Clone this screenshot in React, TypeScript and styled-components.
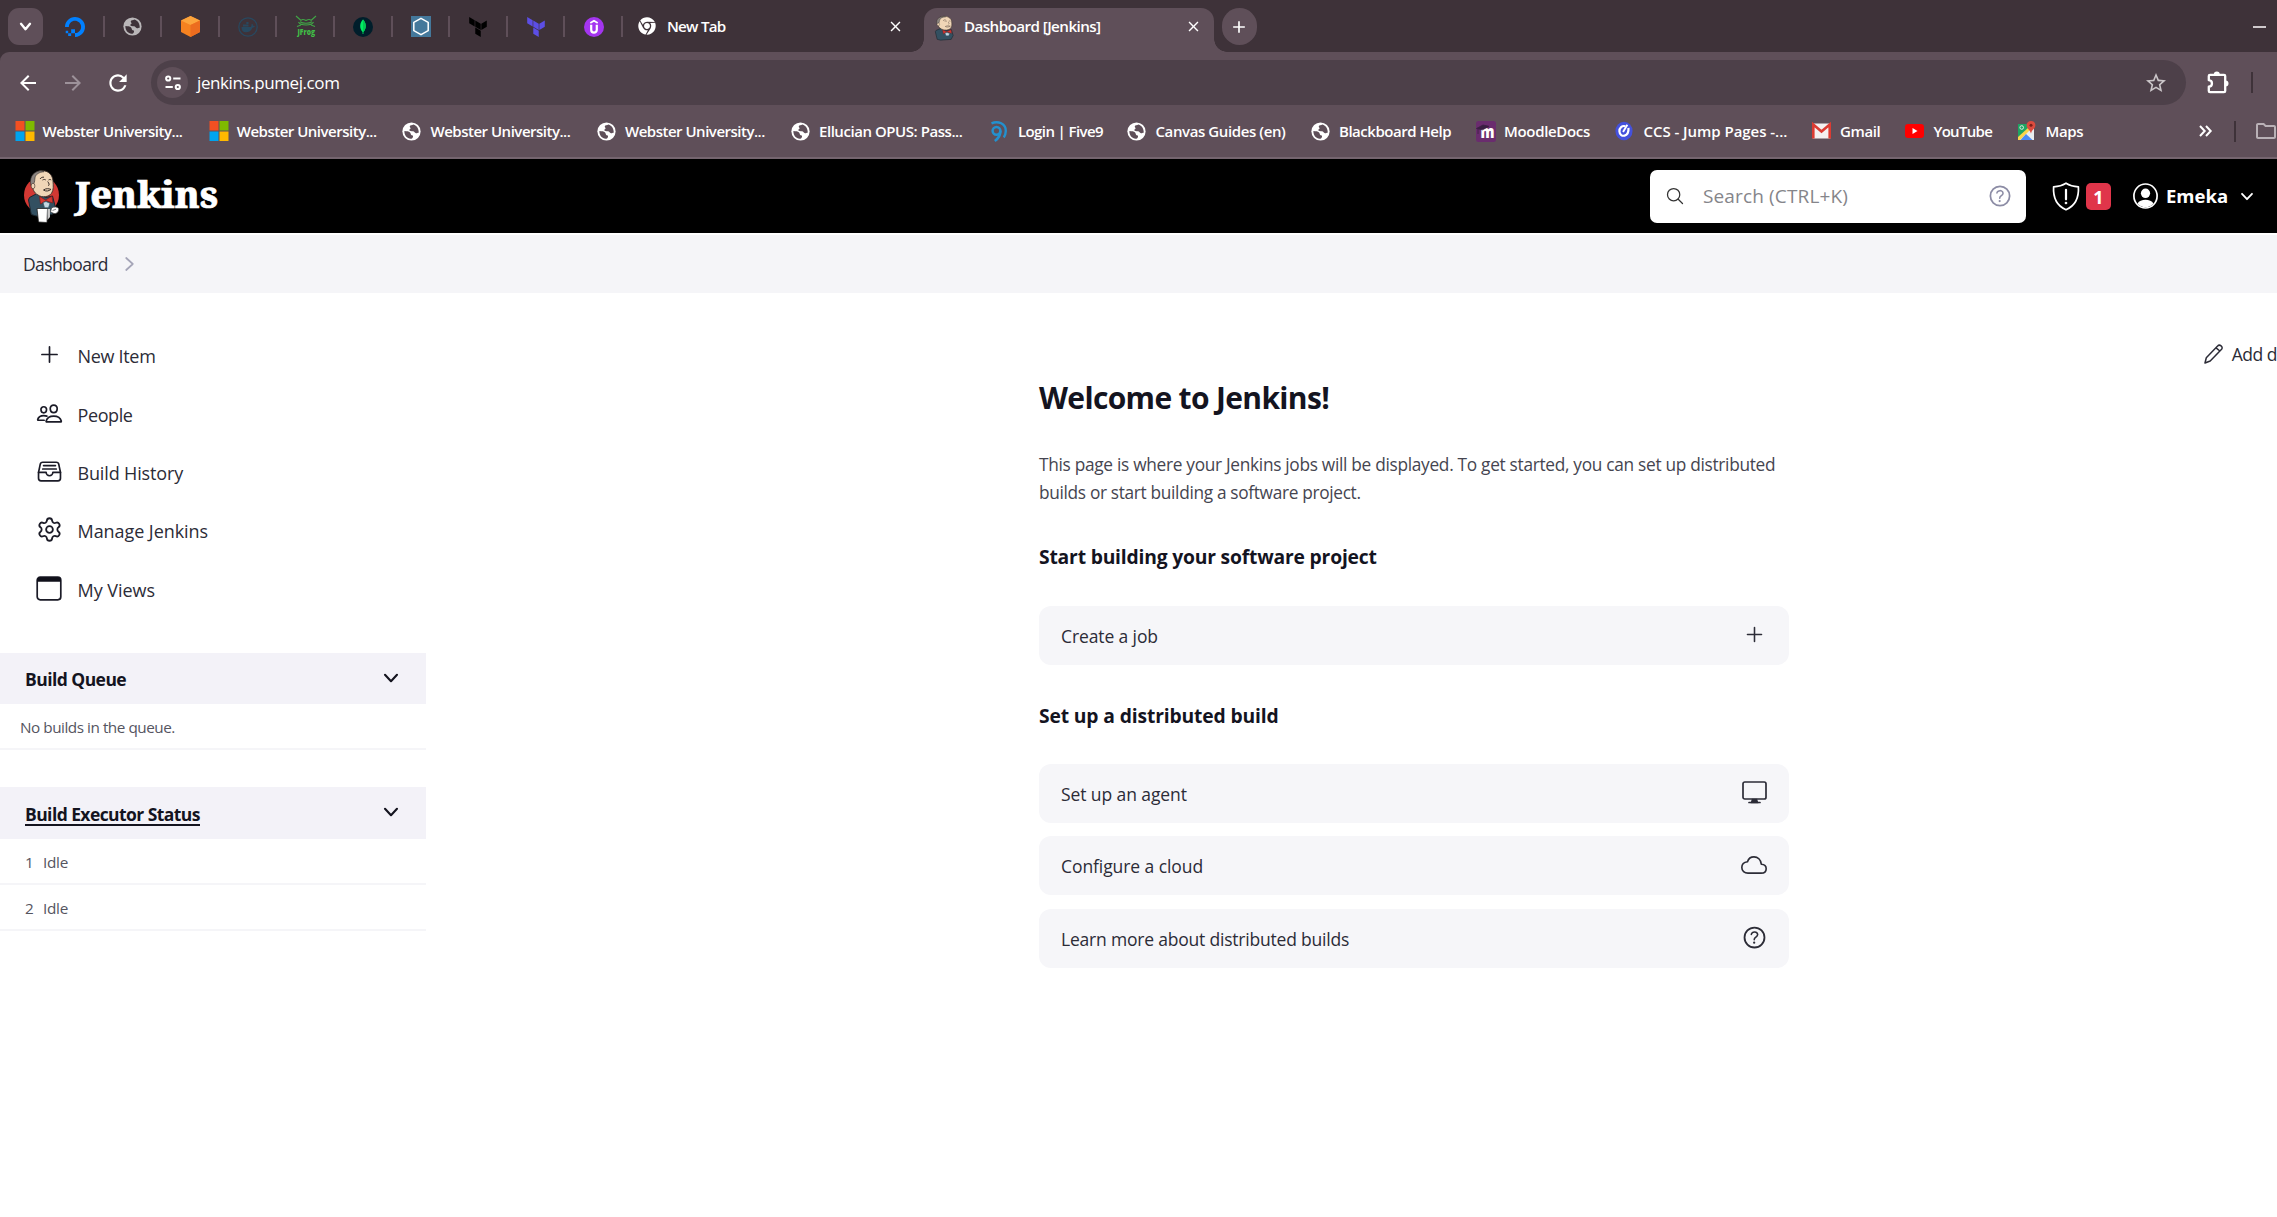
import React from "react";
import styled, { createGlobalStyle } from "styled-components";
import { Settings } from "lucide-react";
import { FaChrome } from "react-icons/fa";
import { MdArrowBack, MdArrowForward, MdRefresh, MdStarBorder, MdOutlineFolder, MdClose, MdAdd } from "react-icons/md";
import {
  IoAddOutline, IoPeopleOutline, IoFileTrayFullOutline, IoCloudOutline, IoHelpCircleOutline, IoSearchOutline,
} from "react-icons/io5";
import { SiDigitalocean, SiTerraform } from "react-icons/si";

const Global = createGlobalStyle`
  * { box-sizing: border-box; }
  html, body { margin: 0; padding: 0; background: #fff; overflow: hidden; }
  body { font-family: "Open Sans", "Noto Sans", sans-serif; color: #14141f; }
  svg { display: block; flex: none; overflow: visible; }
`;

const Page = styled.div`
  width: 2277px;
  height: 1217px;
  display: flex;
  flex-direction: column;
  overflow: hidden;
`;

const Label = styled.span<{ $size: number; $weight?: number; $color?: string; $ls?: number }>`
  font-size: ${(p) => p.$size}px;
  font-weight: ${(p) => p.$weight ?? 400};
  color: ${(p) => p.$color ?? "inherit"};
  letter-spacing: ${(p) => p.$ls ?? 0}px;
  line-height: 28px;
  white-space: nowrap;
`;

/* ---------- browser chrome ---------- */

const TabStrip = styled.div`
  height: 52px;
  flex: none;
  display: flex;
  align-items: flex-start;
  background: #3e3239;
  padding-left: 8px;
`;
const TabSearch = styled.button`
  width: 35px;
  height: 37px;
  margin: 8px 4px 0 0;
  border: 0;
  padding: 0;
  border-radius: 11px;
  background: #5f4f59;
  color: #fff;
  display: grid;
  place-items: center;
`;
const Pinned = styled.div`
  width: 57.6px;
  height: 21px;
  margin-top: 16px;
  padding-left: 1px;
  display: flex;
  align-items: center;
  justify-content: center;
  border-right: 2px solid #5f4f59;
`;
const Tab = styled.div`
  width: 301px;
  height: 52px;
  padding: 0 20px 0 15px;
  display: flex;
  align-items: center;
`;
const ActiveTab = styled.div`
  position: relative;
  width: 290px;
  height: 44px;
  margin-top: 8px;
  padding: 0 12px 8px 11px;
  border-radius: 13px 13px 0 0;
  background: #5f4f59;
  display: flex;
  align-items: center;
  &::before, &::after {
    content: "";
    position: absolute;
    bottom: 0;
    width: 13px;
    height: 13px;
  }
  &::before { left: -13px; background: radial-gradient(circle at 0 0, transparent 12.5px, #5f4f59 13px); }
  &::after { right: -13px; background: radial-gradient(circle at 100% 0, transparent 12.5px, #5f4f59 13px); }
`;
const TabTitle = styled.div`
  flex: 1;
  padding-left: 11px;
  display: flex;
`;
const NewTab = styled.button`
  width: 35px;
  height: 37px;
  margin: 8px 0 0 8px;
  border: 0;
  padding: 0;
  border-radius: 18px;
  background: #5f4f59;
  color: #fff;
  display: grid;
  place-items: center;
`;
const Minimise = styled.div`
  width: 13px;
  height: 2px;
  margin: 26px 11px 0 auto;
  background: #cfc9cc;
`;
const ToolWrap = styled.div`
  background: #3e3239;
  flex: none;
`;
const Toolbar = styled.div`
  height: 53px;
  background: #5f4f59;
  border-top-left-radius: 9px;
  display: flex;
  align-items: center;
  padding: 8px 0 0 16px;
  color: #fff;
`;
const NavIcon = styled.div<{ $dim?: boolean }>`
  width: 24px;
  margin-right: 21px;
  display: flex;
  justify-content: center;
  color: ${(p) => (p.$dim ? "#9d929a" : "#fff")};
`;
const AddressBar = styled.div`
  width: 2035px;
  height: 45px;
  border-radius: 23px;
  background: #4d4049;
  display: flex;
  align-items: center;
  padding: 0 18px 0 6px;
`;
const SiteInfo = styled.div`
  width: 31px;
  height: 31px;
  border-radius: 50%;
  background: #5f4f59;
  display: grid;
  place-items: center;
  margin-right: 9px;
`;
const Grow = styled.div`
  flex: 1;
`;
const Extensions = styled.div`
  margin-left: 21px;
`;
const Rule = styled.div<{ $gap: number }>`
  width: 2px;
  height: 21px;
  margin-left: ${(p) => p.$gap}px;
  background: #3e3239;
  flex: none;
`;
const Bookmarks = styled.div`
  height: 54px;
  background: #5f4f59;
  border-bottom: 2px solid #75656f;
  display: flex;
  align-items: center;
  padding-left: 14.5px;
  color: #fff;
`;
const Bookmark = styled.div<{ $w: number }>`
  width: ${(p) => p.$w}px;
  flex: none;
  display: flex;
  align-items: center;
`;
const BookmarkIcon = styled.div`
  width: 28px;
  display: flex;
`;
const FolderIcon = styled.div`
  margin-left: 18px;
`;

/* ---------- Jenkins header ---------- */

const Header = styled.header`
  height: 74px;
  flex: none;
  background: #000;
  display: flex;
  align-items: center;
  padding-left: 23px;
  color: #fff;
`;
const Wordmark = styled.span`
  font-family: "Noto Serif", "DejaVu Serif Condensed", "DejaVu Serif", serif;
  font-weight: 800;
  font-size: 37px;
  line-height: 40px;
  -webkit-text-stroke: 0.6px #fff;
  margin: -5px 0 0 15px;
`;
const Search = styled.div`
  width: 376px;
  height: 53px;
  margin-left: auto;
  border-radius: 7px;
  background: #fff;
  display: flex;
  align-items: center;
  padding: 0 12px 0 15px;
  color: #8c8ca5;
`;
const SearchText = styled.div`
  flex: 1;
  display: flex;
  padding-left: 18px;
`;
const Alerts = styled.div`
  display: flex;
  align-items: center;
  margin-left: 26px;
  gap: 6px;
`;
const Badge = styled.div`
  width: 25px;
  height: 27px;
  border-radius: 5px;
  background: #e0354a;
  display: grid;
  place-items: center;
`;
const User = styled.div`
  display: flex;
  align-items: center;
  width: 144px;
  margin-left: 22px;
  gap: 8px;
`;
const UserName = styled.div`
  width: 67px;
  display: flex;
`;

const Crumbs = styled.nav`
  height: 60px;
  flex: none;
  border-top: 2px solid #fff;
  background: #f5f5f8;
  display: flex;
  align-items: center;
  padding-left: 23px;
  gap: 17px;
  color: #2c2c37;
`;

/* ---------- page body ---------- */

const Body = styled.div`
  flex: 1;
  display: flex;
  align-items: flex-start;
`;
const Side = styled.aside`
  width: 425.5px;
  flex: none;
  padding-top: 34px;
`;
const Task = styled.div`
  height: 58.4px;
  display: flex;
  align-items: center;
  padding-left: 35.5px;
  color: #2c2c37;
`;
const TaskIcon = styled.div`
  width: 42px;
  height: 27px;
  display: flex;
  align-items: center;
  margin-top: -3px;
  color: #1b1b27;
`;
const PaneHead = styled.div<{ $top: number }>`
  height: 51.3px;
  margin-top: ${(p) => p.$top}px;
  padding: 0 28px 0 25px;
  background: #f3f2f8;
  display: flex;
  align-items: center;
  justify-content: space-between;
`;
const PaneLink = styled.a`
  border-bottom: 2px solid #14141f;
  height: 23px;
  display: flex;
  align-items: center;
  margin-top: 4px;
`;
const PaneToggle = styled.div`
  margin-top: -2px;
`;
const PaneRow = styled.div<{ $pad: number }>`
  height: 46px;
  padding: 2px 0 0 ${(p) => p.$pad}px;
  border-bottom: 2px solid #f5f5f8;
  display: flex;
  align-items: center;
  color: #55555f;
`;
const Num = styled.div`
  width: 18px;
  display: flex;
`;
const Main = styled.main`
  width: 751px;
  margin-left: 613.5px;
  padding-top: 85px;
  display: flex;
  flex-direction: column;
`;
const Title = styled.h1`
  margin: 0;
  height: 40px;
  display: flex;
  align-items: center;
`;
const Intro = styled.p`
  margin: 33px 0 0;
  display: flex;
  flex-direction: column;
`;
const SubHead = styled.h2<{ $top: number }>`
  margin: ${(p) => p.$top}px 0 0;
  height: 28px;
  display: flex;
  align-items: center;
`;
const Card = styled.div<{ $top: number }>`
  height: 59px;
  margin-top: ${(p) => p.$top}px;
  padding: 1px 20px 0 22px;
  border-radius: 12px;
  background: #f6f6f9;
  display: flex;
  align-items: center;
  justify-content: space-between;
  color: #2c2c37;
`;
const CardIcon = styled.div`
  width: 29px;
  display: grid;
  place-items: center;
  margin-top: -3px;
  color: #2c2c37;
`;
const Describe = styled.div`
  margin: 47px 0 0 415px;
  flex: none;
  display: flex;
  align-items: center;
  gap: 9px;
  color: #2c2c37;
`;

/* ---------- drawings ---------- */

const Globe = ({ color = "#fff", hole = "#5f4f59", size = 19 }) => (
  <svg width={size} height={size} viewBox="0 0 20 20">
    <circle cx="10" cy="10" r="9.6" fill={color} />
    <path d="M2.5 9.5c2.600.2 4.700.3 6 1.600.9.9.5 2.300 1.700 2.800 1 .5 1.600-.3 1.400 1.500-.1 1.200-1.300 2.300-2.400 2.300C5.200 17.500 2.300 14 2.500 9.500z" fill={hole} />
    <path d="M12 2.600c-1.300.8-3.400.6-3.800 1.900-.3 1.100 1.100 1.400.8 2.400-.3.900-1.500.9-1.300 1.900.2 1 2.300.9 3.800 1 1.700.1 1.800 1.900 3.200 2.100 1.200.2 1.700-.8 2.900-.7.200-4-1.900-7.400-5.600-8.600z" fill={hole} />
  </svg>
);
const Microsoft = () => (
  <svg width="20" height="20" viewBox="0 0 20 20">
    <path fill="#f25022" d="M.5 0h9v9.500h-9z" /><path fill="#7fba00" d="M10.500 0h9v9.500h-9z" />
    <path fill="#00a4ef" d="M.5 10.500h9V20h-9z" /><path fill="#ffb900" d="M10.500 10.500h9V20h-9z" />
  </svg>
);
const Box = () => (
  <svg width="19" height="21" viewBox="0 0 19 21">
    <path d="M9.500 0 19 4.500v11.500L9.500 21 0 16V4.500z" fill="#f58220" />
    <path d="M9.500 0 19 4.500 9.500 9 0 4.500z" fill="#fca43c" />
    <path d="M19 4.500v11.500L9.500 21V9z" fill="#ec6c1f" />
  </svg>
);
const Docker = () => (
  <svg width="20" height="20" viewBox="0 0 20 20">
    <circle cx="10" cy="10" r="9.200" fill="none" stroke="#28485f" strokeWidth="1.200" />
    <path d="M3.500 10h9.200c1-.4.600-2.500 1.200-3.400 1 .6 1 1.600 1.300 2.300.8-.1 1.300.1 1.700.4-.5 1.100-1.500 1.400-2.400 1.400-1.300 3.300-3.600 4.600-6.500 4.600C5 15.300 3.400 13.300 3.500 10zM5 7.500h5.500v2H5zM8.300 5h2.200v2H8.300z" fill="#28485f" />
  </svg>
);
const FrogText = styled.text`
  font-family: "Open Sans", sans-serif;
  font-weight: 800;
  font-size: 9.500px;
  fill: #40be46;
`;
const Frog = () => (
  <svg width="20" height="21" viewBox="0 0 20 21">
    <path d="M0 0l5 4.500M20 0l-5 4.500M2.500 6c2 4 13 4 15 0M5 4.500c1.500-2 3-1 5 0 2-1 3.500-2 5 0M4 5.800c3 2 9 2 12 0M1 10.500l4-1.500M19 10.500l-4-1.500" fill="none" stroke="#40a546" strokeWidth="1.100" />
    <FrogText x="1.500" y="19" textLength="17.500" lengthAdjust="spacingAndGlyphs">JFrog</FrogText>
  </svg>
);
const Mongo = () => (
  <svg width="20" height="20" viewBox="0 0 20 20">
    <circle cx="10" cy="10" r="10" fill="#001e2b" />
    <path d="M10 2.500c3.200 3.300 4 8.500.4 12.500V17h-.8v-2C6 11 6.800 5.800 10 2.500z" fill="#00ed64" />
    <path d="M10 2.500c3.200 3.300 4 8.500.4 12.500H10z" fill="#00c853" />
  </svg>
);
const Hexagon = () => (
  <svg width="20" height="21" viewBox="0 0 20 21">
    <path d="M0 0h20v21H0z" fill="#44789b" />
    <path d="M10 2.300 17.200 6.400v8.200L10 18.700 2.800 14.600V6.400z" fill="none" stroke="#fff" strokeWidth="1.500" />
  </svg>
);
const Udemy = () => (
  <svg width="20" height="20" viewBox="0 0 20 20">
    <circle cx="10" cy="10" r="10" fill="#a435f0" />
    <path d="M6.300 6 10 3.800 13.700 6" fill="none" stroke="#fff" strokeWidth="1.800" />
    <path d="M7.200 7.800v5c0 3.700 5.600 3.700 5.600 0v-5" fill="none" stroke="#fff" strokeWidth="2.200" />
  </svg>
);
const Five9 = () => (
  <svg width="18" height="21" viewBox="0 0 18 21">
    <path d="M1.500 2.300C8-.5 16 2.500 15.800 10c-.1 2.700-.8 4.800-2 6.500" fill="none" stroke="#2391cf" strokeWidth="2.400" />
    <circle cx="6.500" cy="9.800" r="3.900" fill="none" stroke="#2391cf" strokeWidth="2.500" />
    <path d="M10.400 9.800c0 4-2 7.700-5.600 10.200" fill="none" stroke="#2391cf" strokeWidth="2.700" />
  </svg>
);
const MoodleM = styled.text`
  font-family: "Open Sans", sans-serif;
  font-weight: 800;
  font-size: 18px;
  fill: #fff;
`;
const Moodle = () => (
  <svg width="20" height="21" viewBox="0 0 20 21">
    <rect width="20" height="21" rx="2.500" fill="#6a2c6e" />
    <MoodleM x="4.500" y="16.500" textLength="14" lengthAdjust="spacingAndGlyphs">m</MoodleM>
    <path d="M.5 7.500 7 4l6 1.300L6.500 8.800zM2 8v5" fill="#3a1f42" stroke="#3a1f42" strokeWidth=".8" />
  </svg>
);
const Ccs = () => (
  <svg width="18" height="20" viewBox="0 0 18 21">
    <ellipse cx="9" cy="10.500" rx="9" ry="9.800" fill="#4451dc" />
    <path d="M10.500 5.500C7 4.500 4 7 4.200 11c.2 3.500 3 5 5.500 4.300 2.800-.8 4.300-4 4-8" fill="none" stroke="#fff" strokeWidth="2.300" />
    <path d="M8 11.500 12.500 4" stroke="#fff" strokeWidth="2" />
  </svg>
);
const Gmail = () => (
  <svg width="19" height="16" viewBox="0 0 19 16">
    <rect y=".5" width="19" height="15" rx="1.500" fill="#f4f0f0" />
    <path d="M1.300 15.500V1.500L9.500 8.500l8.200-7v14" fill="none" stroke="#dc3b32" strokeWidth="2.600" />
  </svg>
);
const YouTube = () => (
  <svg width="19" height="14" viewBox="0 0 19 14">
    <rect width="19" height="14" rx="3.200" fill="#f00" /><path d="M7.500 4v6l5-3z" fill="#fff" />
  </svg>
);
const Maps = () => (
  <svg width="19" height="20" viewBox="0 0 19 20">
    <path d="M1 3h16v16H1z" fill="#e9ecef" />
    <path d="M1 3h11v6L1 19z" fill="#1fa463" /><path d="M1 16 11.500 6.500l2 2L3 19H1z" fill="#fcd54b" />
    <path d="M3.500 19 9 13l6.500 6z" fill="#4c8bf5" />
    <circle cx="4.700" cy="6.500" r="1.800" fill="none" stroke="#d9f0e3" strokeWidth="1" />
    <path d="M14 0c2.600 0 4.400 2 4.400 4.200C18.400 7.500 15 8.500 14 12.500 13 8.500 9.600 7.500 9.600 4.200 9.600 2 11.400 0 14 0z" fill="#dd4b3e" />
    <circle cx="14" cy="4.300" r="1.500" fill="#7c1f1a" />
  </svg>
);
const Sliders = () => (
  <svg width="16" height="16" viewBox="0 0 16 16" fill="none" stroke="#fff" strokeWidth="2">
    <circle cx="3.200" cy="3.500" r="2.100" /><path d="M8.200 3.500H15.500" /><circle cx="12.800" cy="12" r="2.100" /><path d="M.5 12H7.800" />
  </svg>
);
const Puzzle = () => (
  <svg width="22" height="23" viewBox="0 0 22 23">
    <path d="M3.600 3.800H17a1.200 1.200 0 0 1 1.200 1.200V20a1.200 1.200 0 0 1-1.200 1.200H3a1.200 1.200 0 0 1-1.200-1.200v-4.300c4.200-.3 4.200-6.200 0-6.500V5A1.200 1.200 0 0 1 3 3.800z" fill="none" stroke="#fff" strokeWidth="2.300" strokeLinejoin="round" />
    <path d="M6.800 3.500a3 3 0 0 1 6 0zM18.500 9.400a3 3 0 0 1 0 6z" fill="#fff" />
  </svg>
);
const Chevron = ({ w = 13, h = 7, sw = 2, color = "currentColor" }) => (
  <svg width={w} height={h} viewBox={`0 0 ${w} ${h}`}>
    <path d={`M1 .8 ${w / 2} ${h - 0.8} ${w - 1} .8`} fill="none" stroke={color} strokeWidth={sw} strokeLinecap="round" strokeLinejoin="round" />
  </svg>
);
const ChevronRight = () => (
  <svg width="9" height="14" viewBox="0 0 9 14">
    <path d="M1.200 1 7.800 7l-6.600 6" fill="none" stroke="#a5a5b8" strokeWidth="1.700" strokeLinecap="round" strokeLinejoin="round" />
  </svg>
);
const DoubleChevron = () => (
  <svg width="13" height="12" viewBox="0 0 13 12">
    <path d="M1 1l4.700 5L1 11M7 1l4.700 5L7 11" fill="none" stroke="#fff" strokeWidth="2" />
  </svg>
);
const Shield = () => (
  <svg width="28" height="29" viewBox="0 0 28 29" fill="none" stroke="#fff" strokeWidth="1.700" strokeLinejoin="round">
    <path d="M14 1.200C10.500 3.400 6.500 4.500 1.600 4.800 1 15 4 23.500 14 27.800 24 23.500 27 15 26.400 4.800 21.500 4.500 17.500 3.400 14 1.200z" />
    <path d="M14 7.800v9.500" strokeWidth="2.200" strokeLinecap="round" /><circle cx="14" cy="21" r=".5" />
  </svg>
);
const Avatar = () => (
  <svg width="25" height="26" viewBox="0 0 25 26">
    <ellipse cx="12.500" cy="13" rx="11.600" ry="12" fill="#000" stroke="#fff" strokeWidth="1.700" />
    <ellipse cx="12.500" cy="10.300" rx="4.600" ry="4.800" fill="#fff" />
    <path d="M4.600 20.500c2.500-5 13.300-5 15.800 0-3.500 5-12.300 5-15.800 0z" fill="#fff" />
  </svg>
);
const Window = () => (
  <svg width="26" height="25" viewBox="0 0 26 25">
    <rect x="1.200" y="1.200" width="23.600" height="22.600" rx="3" fill="none" stroke="#1b1b27" strokeWidth="1.700" />
    <path d="M1.200 5.800V4c0-1.800 1-2.800 2.800-2.800h18c1.800 0 2.800 1 2.800 2.800v1.800z" fill="#10101a" />
  </svg>
);
const Monitor = () => (
  <svg width="25" height="23" viewBox="0 0 25 23" fill="none" stroke="currentColor" strokeWidth="1.700">
    <rect x="1" y="1" width="23" height="17" rx="1.800" />
    <path d="M7 21.500h11" strokeLinecap="round" />
    <path d="M10.500 18.500h4l.8 2.800h-5.600z" fill="currentColor" />
  </svg>
);
const Pencil = () => (
  <svg width="19" height="20" viewBox="0 0 19 20" fill="none" stroke="currentColor" strokeWidth="1.500" strokeLinejoin="round">
    <path d="M1 19l1.300-5.300L13.600 2c2-2.200 6 .8 4 3.300L6.200 17z" /><path d="M12 3.800 15.900 7" />
  </svg>
);
const Butler = ({ w = 37, h = 53, ring = true }) => (
  <svg width={w} height={h} viewBox={ring ? "0 0 37 53" : "5 0 27 40"} preserveAspectRatio="none">
    {ring && <ellipse cx="18.500" cy="25" rx="17.500" ry="18" fill="#d33833" />}
    <path d="M6.500 27.500 14 23.500l9 4 6.500-1.500 2.800 11-3 7.500-16 1.500-5-1.500L5.500 30z" fill="#335061" stroke="#1b2730" strokeWidth="1" />
    <path d="M9 14C7 8 10 2 17 .8c7-1 12.500 3 13 10 .3 5 .8 9-1.500 12.500C26 27 19 28 15 25 11 23 9.500 19 9 14z" fill="#f0d6b7" stroke="#3a2f2a" strokeWidth=".9" />
    <path d="M8.200 16C6 9 9 2 17 .8c2 0 3.500.3 4 1-5 .2-8.500 2.700-9 6-.3 2-.2 4-1.200 6z" fill="#8b8480" stroke="#2c2826" strokeWidth=".6" />
    <ellipse cx="10" cy="16" rx="1.900" ry="2.700" fill="#f0d6b7" stroke="#3a2f2a" strokeWidth=".6" />
    <path d="M19.500 10c1.300-.8 2.500-.6 3.300 0M25.500 10c1-.7 2-.6 2.700 0M24.700 11.500c1.500 2 2 3.500.6 4.300M20.500 20c2.500-1.800 5-1.500 7.500-.6-2.500 1.800-5 2.300-7.500.6zM17 9c1-1.500 2.500-2 4-1.800" fill="none" stroke="#3a2f2a" strokeWidth={ring ? 1 : 0.7} />
    <path d="M16.500 26.500l6 3.500 6.500-3.800.8 6.800-6.800-2.300-5.500 3.300z" fill="#d33833" stroke="#81130f" strokeWidth=".6" />
    <path d="M20 32.500l3-1 4 1.800-1.500 4.500h-4z" fill="#c3d7e2" stroke="#335061" strokeWidth=".7" />
    {ring && (
      <>
        <path d="M14 38.500h10.500l-.5 14-8.500-.5z" fill="#fff" stroke="#222" strokeWidth=".8" />
        <path d="M24.500 39v11l2.500-3V39z" fill="#c9c9c9" />
        <path d="M28.500 38c2-1.500 6-1.500 7 .5.800 2.500-1.500 5.500-4.500 5l-3.500-1.500z" fill="#fff" stroke="#4a4a4a" strokeWidth=".8" />
        <path d="M29.500 40.500l3.500-1.300" stroke="#777" strokeWidth=".9" />
      </>
    )}
  </svg>
);

/* ---------- data ---------- */

const pinned: React.ReactNode[] = [
  <SiDigitalocean size={20} color="#0080ff" />, <Globe color="#b9b6b8" hole="#3e3239" size={19} />, <Box />, <Docker />,
  <Frog />, <Mongo />, <Hexagon />, <SiTerraform size={20} color="#000" />, <SiTerraform size={20} color="#5c4ee5" />, <Udemy />,
];

const bookmarks: { name: string; icon: React.ReactNode; w: number; ls: number }[] = [
  { name: "Webster University...", icon: <Microsoft />, w: 194.2, ls: -0.49 },
  { name: "Webster University...", icon: <Microsoft />, w: 193.8, ls: -0.49 },
  { name: "Webster University...", icon: <Globe />, w: 194.5, ls: -0.49 },
  { name: "Webster University...", icon: <Globe />, w: 194, ls: -0.49 },
  { name: "Ellucian OPUS: Pass...", icon: <Globe />, w: 199, ls: -0.45 },
  { name: "Login | Five9", icon: <Five9 />, w: 137.5, ls: -0.6 },
  { name: "Canvas Guides (en)", icon: <Globe />, w: 183.5, ls: -0.4 },
  { name: "Blackboard Help", icon: <Globe />, w: 165, ls: -0.47 },
  { name: "MoodleDocs", icon: <Moodle />, w: 139.5, ls: -0.32 },
  { name: "CCS - Jump Pages -...", icon: <Ccs />, w: 196.5, ls: -0.04 },
  { name: "Gmail", icon: <Gmail />, w: 93.5, ls: -0.4 },
  { name: "YouTube", icon: <YouTube />, w: 112, ls: -0.7 },
  { name: "Maps", icon: <Maps />, w: 182, ls: -0.4 },
];

const tasks: { name: string; icon: React.ReactNode; ls: number }[] = [
  { name: "New Item", icon: <IoAddOutline size={27} />, ls: -0.31 },
  { name: "People", icon: <IoPeopleOutline size={27} />, ls: -0.4 },
  { name: "Build History", icon: <IoFileTrayFullOutline size={27} />, ls: -0.15 },
  { name: "Manage Jenkins", icon: <Settings size={27} strokeWidth={1.6} />, ls: -0.06 },
  { name: "My Views", icon: <Window />, ls: -0.04 },
];

export default function App() {
  return (
    <Page>
      <Global />
      <TabStrip>
        <TabSearch><Chevron w={11} h={7} sw={2.4} /></TabSearch>
        {pinned.map((icon, i) => <Pinned key={i}>{icon}</Pinned>)}
        <Tab>
          <FaChrome size={18} color="#fff" />
          <TabTitle><Label $size={15.2} $weight={600} $color="#fff" $ls={-0.75}>New Tab</Label></TabTitle>
          <MdClose size={17} color="#fff" />
        </Tab>
        <ActiveTab>
          <Butler w={18} h={21} ring={false} />
          <TabTitle><Label $size={15.2} $weight={600} $color="#fff" $ls={-0.57}>Dashboard [Jenkins]</Label></TabTitle>
          <MdClose size={17} color="#fff" />
        </ActiveTab>
        <NewTab><MdAdd size={20} /></NewTab>
        <Minimise />
      </TabStrip>
      <ToolWrap>
        <Toolbar>
          <NavIcon><MdArrowBack size={24} /></NavIcon>
          <NavIcon $dim><MdArrowForward size={24} /></NavIcon>
          <NavIcon><MdRefresh size={26} /></NavIcon>
          <AddressBar>
            <SiteInfo><Sliders /></SiteInfo>
            <Label $size={17} $ls={-0.41}>jenkins.pumej.com</Label>
            <Grow />
            <MdStarBorder size={24} color="#cbc6c9" />
          </AddressBar>
          <Extensions><Puzzle /></Extensions>
          <Rule $gap={22} />
        </Toolbar>
        <Bookmarks>
          {bookmarks.map((b, i) => (
            <Bookmark key={i} $w={b.w}>
              <BookmarkIcon>{b.icon}</BookmarkIcon>
              <Label $size={15} $weight={600} $ls={b.ls}>{b.name}</Label>
            </Bookmark>
          ))}
          <DoubleChevron />
          <Rule $gap={22} />
          <FolderIcon><MdOutlineFolder size={24} color="#b9b1b6" /></FolderIcon>
        </Bookmarks>
      </ToolWrap>
      <Header>
        <Butler />
        <Wordmark>Jenkins</Wordmark>
        <Search>
          <IoSearchOutline size={20} color="#333" />
          <SearchText><Label $size={19} $color="#85858a" $ls={0.14}>Search (CTRL+K)</Label></SearchText>
          <IoHelpCircleOutline size={28} />
        </Search>
        <Alerts>
          <Shield />
          <Badge><Label $size={18} $weight={700}>1</Label></Badge>
        </Alerts>
        <User>
          <Avatar />
          <UserName><Label $size={18.5} $weight={700}>Emeka</Label></UserName>
          <Chevron w={12} h={7} sw={1.8} />
        </User>
      </Header>
      <Crumbs>
        <Label $size={17.5} $ls={-0.6}>Dashboard</Label>
        <ChevronRight />
      </Crumbs>
      <Body>
        <Side>
          {tasks.map((t) => (
            <Task key={t.name}>
              <TaskIcon>{t.icon}</TaskIcon>
              <Label $size={18} $weight={500} $ls={t.ls}>{t.name}</Label>
            </Task>
          ))}
          <PaneHead $top={34}>
            <Label $size={17.5} $weight={700} $ls={-0.55}>Build Queue</Label>
            <PaneToggle><Chevron w={14} h={8} sw={2.1} /></PaneToggle>
          </PaneHead>
          <PaneRow $pad={20}><Label $size={15.3} $ls={-0.47}>No builds in the queue.</Label></PaneRow>
          <PaneHead $top={37}>
            <PaneLink><Label $size={17.5} $weight={700} $ls={-0.57}>Build Executor Status</Label></PaneLink>
            <PaneToggle><Chevron w={14} h={8} sw={2.1} /></PaneToggle>
          </PaneHead>
          <PaneRow $pad={25}><Num><Label $size={15.3}>1</Label></Num><Label $size={15.3} $ls={-0.28}>Idle</Label></PaneRow>
          <PaneRow $pad={25}><Num><Label $size={15.3}>2</Label></Num><Label $size={15.3} $ls={-0.28}>Idle</Label></PaneRow>
        </Side>
        <Main>
          <Title><Label $size={30} $weight={700} $ls={-0.66}>Welcome to Jenkins!</Label></Title>
          <Intro>
            <Label $size={17.3} $color="#454550" $ls={-0.3}>This page is where your Jenkins jobs will be displayed. To get started, you can set up distributed</Label>
            <Label $size={17.3} $color="#454550" $ls={-0.33}>builds or start building a software project.</Label>
          </Intro>
          <SubHead $top={36}><Label $size={19.3} $weight={700} $ls={-0.19}>Start building your software project</Label></SubHead>
          <Card $top={35}><Label $size={17.5} $weight={500} $ls={-0.11}>Create a job</Label><CardIcon><IoAddOutline size={25} /></CardIcon></Card>
          <SubHead $top={37}><Label $size={19.3} $weight={700} $ls={-0.14}>Set up a distributed build</Label></SubHead>
          <Card $top={34}><Label $size={17.5} $weight={500} $ls={-0.09}>Set up an agent</Label><CardIcon><Monitor /></CardIcon></Card>
          <Card $top={13.3}><Label $size={17.5} $weight={500} $ls={-0.08}>Configure a cloud</Label><CardIcon><IoCloudOutline size={26} /></CardIcon></Card>
          <Card $top={13.3}><Label $size={17.5} $weight={500} $ls={-0.2}>Learn more about distributed builds</Label><CardIcon><IoHelpCircleOutline size={29} /></CardIcon></Card>
        </Main>
        <Describe><Pencil /><Label $size={17.5} $ls={-0.5}>Add d</Label></Describe>
      </Body>
    </Page>
  );
}
